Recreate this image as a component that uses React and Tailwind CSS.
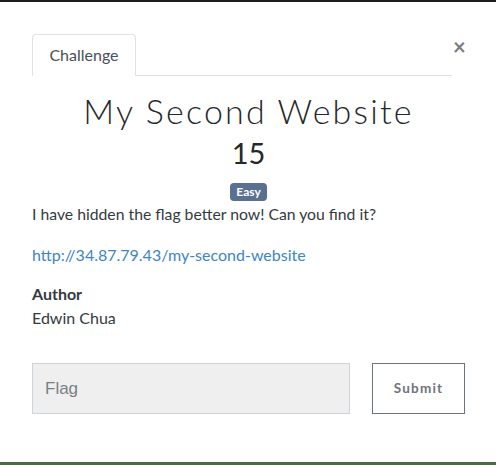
export default function App() {
  return (
    <div className="w-[496px] h-[465px] bg-white flex flex-col overflow-hidden" style={{ fontFamily: "Lato, 'Noto Sans', sans-serif" }}>
      <div className="h-[2px] bg-[#1a1e21] shrink-0" />
      <div className="flex-1 pl-[32px] pr-[31px] pt-[32px] text-[#343a40]">
        <div className="flex items-start">
          <div className="flex-1 flex border-b border-[#dee2e6] mr-[1px]">
            <div className="w-[104px] h-[42px] -mb-px border border-[#dee2e6] border-b-white rounded-t-[4px] bg-white flex items-center justify-center text-[16px] text-[#495057]">
              Challenge
            </div>
          </div>
          <button className="w-[12px] mt-[2px] text-[#7b7b7b] text-[22px] leading-[22px] font-bold">×</button>
        </div>
        <h2 className="mt-[15px] text-center text-[34px] leading-[40px] font-light tracking-[2.2px] text-[#25282b]">My Second Website</h2>
        <div className="mt-[5px] text-center text-[29px] leading-[34px] text-[#25282b]">15</div>
        <div className="mt-[13px] flex justify-center">
          <span className="px-[6px] h-[18px] rounded-[4px] bg-[#5a7090] text-white text-[12px] font-bold flex items-center">Easy</span>
        </div>
        <p className="mt-[1px] text-[15.75px] leading-[24px]">I have hidden the flag better now! Can you find it?</p>
        <p className="mt-[17px] text-[16px] leading-[24px] text-[#3d85c6]">http://34.87.79.43/my-second-website</p>
        <p className="mt-[15px] text-[16px] leading-[24px] font-bold">Author</p>
        <p className="text-[16px] leading-[24px]">Edwin Chua</p>
        <div className="mt-[33px] flex items-start">
          <div className="w-[318px] h-[51px] bg-[#efefef] border border-[#ced4da] flex items-center pl-[12px] text-[17px] text-[#7a7f84]" style={{ fontFamily: "'Liberation Sans', Arial, sans-serif" }}>
            Flag
          </div>
          <button className="ml-auto w-[93px] h-[51px] border border-[#6c757d] text-[#6c757d] text-[13.5px] font-bold tracking-[1.2px]">Submit</button>
        </div>
      </div>
      <div className="h-[3px] bg-[#4b6a48] shrink-0" />
    </div>
  );
}
